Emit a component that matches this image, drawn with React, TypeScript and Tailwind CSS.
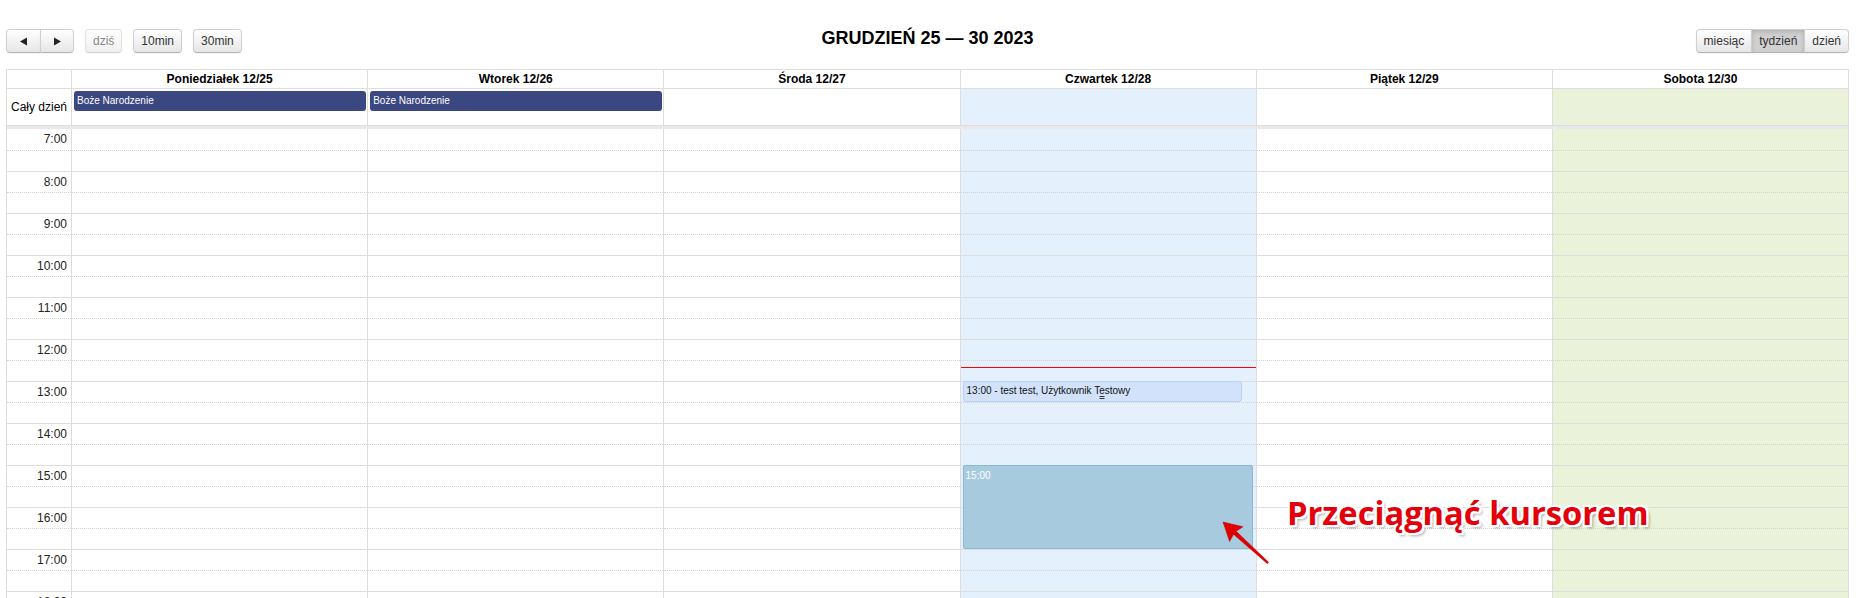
import React from "react";

type Day = {
  label: string;
  tint: string;
  holiday?: string;
  today?: boolean;
};

const DAYS: Day[] = [
  { label: "Poniedziałek 12/25", tint: "bg-white", holiday: "Boże Narodzenie" },
  { label: "Wtorek 12/26", tint: "bg-white", holiday: "Boże Narodzenie" },
  { label: "Środa 12/27", tint: "bg-white" },
  { label: "Czwartek 12/28", tint: "bg-[#e4f0fc]", today: true },
  { label: "Piątek 12/29", tint: "bg-white" },
  { label: "Sobota 12/30", tint: "bg-[#eaf3d9]" },
];

// only what fits on screen: 7:00 .. 18:00
const HOURS = Array.from({ length: 12 }, (_, i) => i + 7);

const btn =
  "h-[24px] px-[7px] flex items-center justify-center border border-[#cfcfcf] border-b-[#b3b3b3] bg-linear-to-b from-white to-[#e6e6e6] text-[#333] shadow-[inset_0_1px_0_rgba(255,255,255,0.2),0_1px_2px_rgba(0,0,0,0.05)]";

function Arrow({ dir }: { dir: "left" | "right" }) {
  return (
    <svg width="8" height="9" viewBox="0 0 8 9">
      {dir === "left" ? (
        <polygon points="0,4.5 7,0.5 7,8.5" fill="#222" />
      ) : (
        <polygon points="8,4.5 1,0.5 1,8.5" fill="#222" />
      )}
    </svg>
  );
}

function Slots() {
  return (
    <>
      {HOURS.map((h) => (
        <React.Fragment key={h}>
          <div className={h === 7 ? "h-[21px]" : "h-[21px] border-t border-[#ddd]"} />
          <div className="h-[21px] border-t border-dotted border-[#d4d4d4]" />
        </React.Fragment>
      ))}
    </>
  );
}

function TodayOverlays() {
  return (
    <>
      {/* now line */}
      <div className="absolute left-0 right-0 top-[238px] h-px bg-[#ff0000]" />
      {/* existing event */}
      <div className="absolute left-[2px] right-[14px] top-[252px] h-[21px] rounded-[3px] border border-[#bcd2f2] bg-[#d2e2fb] pl-[3px] pt-[2px] text-[10px] leading-[13px] text-[#111]">
        13:00 - test test, Użytkownik Testowy
        <div className="absolute bottom-[2px] left-1/2 h-[3px] w-[5px] -translate-x-1/2 border-y border-[#333]" />
      </div>
      {/* drag selection */}
      <div className="absolute left-[2px] right-[3px] top-[336px] h-[84px] rounded-[2px] border border-[#8db8d3] bg-[#a8cadf] pl-[2px] pt-[3px] text-[10px] leading-[13px] text-white">
        15:00
      </div>
    </>
  );
}

export default function App() {
  return (
    <div className="relative h-screen overflow-hidden bg-white font-['Liberation_Sans',Arial,sans-serif] text-[12px] text-black">
      <div className="ml-[6px] mr-[13px] pt-[29px]">
        {/* toolbar */}
        <div className="grid grid-cols-[1fr_auto_1fr] items-start">
          <div className="flex">
            <div className="flex">
              <button className={`${btn} w-[35px] rounded-l-[4px]`}>
                <Arrow dir="left" />
              </button>
              <button className={`${btn} -ml-px w-[34px] rounded-r-[4px]`}>
                <Arrow dir="right" />
              </button>
            </div>
            <button className={`${btn} ml-[11px] rounded-[4px] opacity-60`}>dziś</button>
            <button className={`${btn} ml-[11px] rounded-[4px]`}>10min</button>
            <button className={`${btn} ml-[11px] rounded-[4px]`}>30min</button>
          </div>
          <h2 className="text-[18px] font-bold leading-[18px]">GRUDZIEŃ 25 — 30 2023</h2>
          <div className="flex justify-end">
            <button className={`${btn} rounded-l-[4px]`}>miesiąc</button>
            <button className={`${btn} -ml-px border-[#bdbdbd] bg-none bg-[#d0d0d0] shadow-[inset_0_2px_4px_rgba(0,0,0,0.15),0_1px_2px_rgba(0,0,0,0.05)]`}>
              tydzień
            </button>
            <button className={`${btn} -ml-px rounded-r-[4px]`}>dzień</button>
          </div>
        </div>

        {/* calendar grid */}
        <div className="mt-[16px] border-x border-t border-[#ddd]">
          {/* day headers */}
          <div className="flex border-b border-[#ddd]">
            <div className="w-[64px] shrink-0" />
            {DAYS.map((d) => (
              <div key={d.label} className="h-[18px] flex-1 border-l border-[#ddd] text-center font-bold leading-[18px]">
                {d.label}
              </div>
            ))}
          </div>

          {/* all-day row */}
          <div className="flex border-b border-[#ddd]">
            <div className="flex h-[36px] w-[64px] shrink-0 items-center justify-end pr-[4px]">Cały dzień</div>
            {DAYS.map((d) => (
              <div key={d.label} className={`h-[36px] flex-1 border-l border-[#ddd] ${d.tint}`}>
                {d.holiday && (
                  <div className="ml-[2px] mr-[1px] mt-[2px] h-[20px] rounded-[3px] bg-[#3a4781] pl-[3px] text-[10px] leading-[20px] text-white">
                    {d.holiday}
                  </div>
                )}
              </div>
            ))}
          </div>
          <div className="h-[3px] bg-[#e9e9e9]" />

          {/* time grid */}
          <div className="flex">
            <div className="w-[64px] shrink-0">
              {HOURS.map((h) => (
                <React.Fragment key={h}>
                  <div
                    className={`h-[21px] pr-[4px] pt-[3px] text-right leading-[14px] text-[#222] ${
                      h === 7 ? "" : "border-t border-[#ddd]"
                    }`}
                  >
                    {h}:00
                  </div>
                  <div className="h-[21px] border-t border-dotted border-[#d4d4d4]" />
                </React.Fragment>
              ))}
            </div>
            {DAYS.map((d) => (
              <div key={d.label} className={`relative flex-1 border-l border-[#ddd] ${d.tint}`}>
                <Slots />
                {d.today && <TodayOverlays />}
              </div>
            ))}
          </div>
        </div>
      </div>

      {/* annotation */}
      <svg className="absolute left-[1215px] top-[515px]" width="60" height="56" viewBox="0 0 60 56">
        <polygon
          points="8,7 28,11.7 21.2,16.3 53.6,47.3 52.4,48.7 18.5,19.3 14.6,26.5"
          fill="#e00000"
          stroke="#c00000"
          strokeWidth="0.5"
          strokeLinejoin="round"
        />
      </svg>
      <div className="absolute left-[1287px] top-[497px] font-['Open_Sans',sans-serif] text-[32.7px] font-bold leading-none text-[#e3000b] [text-shadow:-2px_-2px_0_#fff,2px_-2px_0_#fff,-2px_2px_0_#fff,2px_2px_0_#fff,0_2px_0_#fff,0_-2px_0_#fff,2px_0_0_#fff,-2px_0_0_#fff,3px_3px_3px_rgba(0,0,0,0.35)]">
        Przeciągnąć kursorem
      </div>
    </div>
  );
}
